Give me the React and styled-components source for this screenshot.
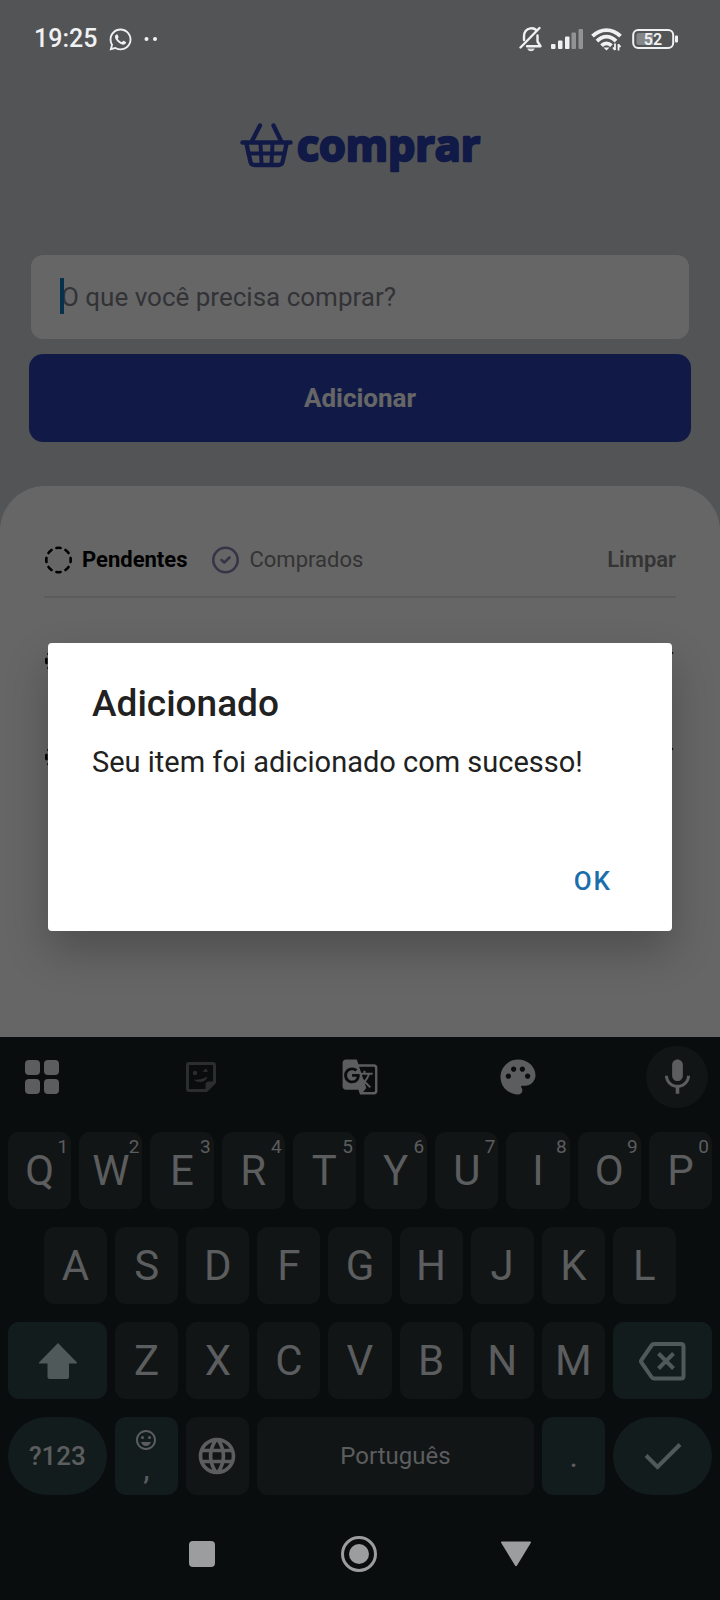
import React from "react";
import styled, { createGlobalStyle } from "styled-components";
import { FaWhatsapp } from "react-icons/fa";
import {
  MdGTranslate,
  MdPalette,
  MdMic,
  MdLanguage,
  MdOutlineEmojiEmotions,
} from "react-icons/md";
import { Trash2 } from "lucide-react";

const GlobalStyle = createGlobalStyle`
  *, *::before, *::after { box-sizing: border-box; }
  body { margin: 0; background: #0a0d0e; }
  body, button, input { font-family: Roboto, "Liberation Sans", sans-serif; }
  button { border: 0; padding: 0; margin: 0; background: none; color: inherit; cursor: pointer; }
  svg { display: block; flex: none; }
`;

const Screen = styled.div`
  position: relative;
  display: flex;
  flex-direction: column;
  min-height: 100vh;
`;

const AppArea = styled.div`
  position: relative;
  flex: 1;
  display: flex;
  flex-direction: column;
  background: #d0d2d8;
`;

const Scrim = styled.div`
  position: absolute;
  inset: 0;
  z-index: 1;
  background: rgba(0, 0, 0, 0.6);
`;

/* Status bar */

const StatusBar = styled.header`
  position: relative;
  z-index: 2;
  display: flex;
  justify-content: space-between;
  align-items: center;
  height: 78px;
  padding: 0 42px 0 34px;
  color: #f0f1f2;
`;

const StatusGroup = styled.div`
  display: flex;
  align-items: center;
  gap: ${(p) => p.$gap}px;
`;

const Clock = styled.time`
  font-size: 25px;
  line-height: 32px;
  font-weight: 500;
`;

/* App content */

const LogoBox = styled.div`
  display: flex;
  justify-content: center;
  padding-top: 32px;
`;

const Form = styled.form`
  display: flex;
  flex-direction: column;
  gap: 13px;
  padding: 73px 29px 44px;
`;

const Field = styled.div`
  position: relative;
  height: 88px;
`;

const TextInput = styled.input`
  width: 100%;
  height: 100%;
  padding: 0 30px;
  border: 2px solid #cfd1d6;
  border-radius: 14px;
  background: #fff;
  font-size: 26px;
  outline: none;
  &::placeholder { color: #7d808b; opacity: 1; }
`;

const Caret = styled.span`
  position: absolute;
  left: 31px;
  top: 25px;
  width: 4px;
  height: 36px;
  background: #0f78c0;
`;

const AddButton = styled.button`
  height: 88px;
  border-radius: 14px;
  background: #2c43b1;
  color: #fff;
  font-size: 26px;
  font-weight: 700;
`;

const Panel = styled.main`
  flex: 1;
  padding: 56px 44px 0;
  border-radius: 45px 45px 0 0;
  background: #fff;
`;

const Filters = styled.div`
  display: flex;
  align-items: center;
  gap: 24px;
  padding-bottom: 18px;
  border-bottom: 2px solid #e4e6ec;
`;

const FilterButton = styled.button`
  display: flex;
  align-items: center;
  gap: 9px;
  font-size: 22px;
  line-height: 36px;
  font-weight: ${(p) => (p.$active ? 700 : 400)};
  color: ${(p) => (p.$active ? "#000" : "#7f7f7f")};
`;

const ClearButton = styled.button`
  margin-left: auto;
  font-size: 22px;
  line-height: 36px;
  font-weight: 600;
  color: #828282;
`;

const Items = styled.ul`
  list-style: none;
  margin: 0;
  padding: 36px 0 0;
`;

const Item = styled.li`
  display: flex;
  align-items: center;
  justify-content: space-between;
  height: 54px;
  margin-bottom: 42px;
`;

/* Dialog */

const DialogLayer = styled.div`
  position: absolute;
  inset: 0;
  z-index: 3;
  display: flex;
  align-items: center;
  justify-content: center;
  padding: 0 48px 26px;
`;

const Dialog = styled.section`
  flex: 1;
  max-width: 624px;
  padding: 38px 44px 16px;
  border-radius: 4px;
  background: #fff;
  color: #212121;
  box-shadow: 0 20px 44px rgba(0, 0, 0, 0.24);
`;

const DialogTitle = styled.h2`
  margin: 0;
  font-size: 37px;
  line-height: 46px;
  font-weight: 500;
`;

const DialogText = styled.p`
  margin: 17px 0 66px;
  font-size: 29px;
  line-height: 36px;
`;

const DialogActions = styled.div`
  display: flex;
  justify-content: flex-end;
`;

const DialogButton = styled.button`
  padding: 0 16px;
  height: 69px;
  color: #1b6eab;
  font-size: 26px;
  font-weight: 500;
  letter-spacing: 2px;
`;

/* Keyboard */

const Keyboard = styled.section`
  display: flex;
  flex-direction: column;
  background: #0a0d0e;
  color: #5b5d5e;
`;

const Toolbar = styled.div`
  display: flex;
  justify-content: space-between;
  padding: 9px 12px 24px 11px;
`;

const ToolButton = styled.button`
  display: grid;
  place-items: center;
  width: 62px;
  height: 62px;
  border-radius: 50%;
  background: ${(p) => (p.$filled ? "#121516" : "none")};
`;

const Rows = styled.div`
  display: flex;
  flex-direction: column;
  gap: 18px;
`;

const KeyRow = styled.div`
  display: grid;
  grid-template-columns: ${(p) => p.$columns};
  gap: 8px;
  padding: 0 ${(p) => p.$inset}px;
`;

const Key = styled.button`
  position: relative;
  display: flex;
  flex-direction: column;
  align-items: center;
  justify-content: center;
  min-width: 0;
  height: ${(p) => (p.$tall ? 78 : 77)}px;
  border-radius: ${(p) => (p.$round ? 39 : 11)}px;
  background: ${(p) => (p.$accent ? "#131c1d" : "#121516")};
  font-size: ${(p) => p.$size || 42}px;
  font-weight: ${(p) => p.$weight || 400};
  line-height: 1;
`;

const Hint = styled.span`
  position: absolute;
  top: 5px;
  right: 3px;
  font-size: 19px;
  font-weight: 400;
`;

const NavBar = styled.nav`
  display: flex;
  align-items: center;
  justify-content: center;
  gap: 117px;
  height: 105px;
  padding: 13px 2px 0 0;
  color: #9c9d9e;
`;

const NavButton = styled.button`
  display: grid;
  place-items: center;
  width: 40px;
  height: 40px;
`;

/* Icons */

const Dots = () => (
  <svg width="14" height="6" viewBox="0 0 14 6" fill="currentColor">
    <circle cx="2.5" cy="3" r="2" />
    <circle cx="11" cy="3" r="2" />
  </svg>
);

const MutedBell = () => (
  <svg width="24" height="26" viewBox="0 0 24 26" fill="none" stroke="currentColor" strokeWidth="2.4" strokeLinecap="round" strokeLinejoin="round">
    <path d="M5 14V10.5C5 6.500 7 3.200 11.500 2.400C14 2 16 2.800 17.400 4.200" />
    <path d="M18.500 9.500V15.500L21.500 20.200H8" />
    <path d="M20.500 2L1.500 21.500" />
    <path d="M9 23.400C10.500 25.200 13.500 25.200 15 23.400Z" fill="currentColor" strokeWidth="1" />
  </svg>
);

const Signal = () => (
  <svg width="32" height="22" viewBox="0 0 32 22" fill="currentColor">
    <rect x="0" y="16" width="4.5" height="5" rx="1" />
    <rect x="7" y="12.5" width="4.5" height="8.5" rx="1" />
    <rect x="14" y="8.5" width="4.5" height="12.5" rx="1" />
    <g opacity="0.4">
      <rect x="20.5" y="4.5" width="4.5" height="16.5" rx="1" />
      <rect x="27.5" y="1" width="4.5" height="20" rx="1" />
    </g>
  </svg>
);

const Wifi = () => (
  <svg width="32" height="24" viewBox="0 0 32 24" fill="none" stroke="currentColor" strokeWidth="3.8">
    <path d="M1.5 9.2C9.500 1 21.500 1 29.500 9.200" />
    <path d="M6 14.200C12 8.200 19 8.200 25 14.200" />
    <path d="M10.500 18.600C13.500 15.600 17.500 15.600 20.500 18.600" />
    <path d="M12.500 20.600L15.500 23.600L18.500 20.600Z" fill="currentColor" stroke="none" />
    <path d="M24 16.500V23M22 20.500L24 23M27.500 23.500V17M27.500 17.500L29.500 20" strokeWidth="1.800" />
  </svg>
);

const Battery = () => (
  <svg width="47" height="22" viewBox="0 0 47 22">
    <rect x="2.200" y="2" width="40" height="18" rx="5" fill="none" stroke="currentColor" strokeWidth="2" />
    <path d="M8 5H22V17H8Q5.500 17 5.500 14.500V7.500Q5.500 5 8 5Z" fill="#858687" />
    <rect x="44" y="7.500" width="3" height="7" rx="1" fill="currentColor" />
    <text x="22" y="17" textAnchor="middle" fontSize="16" fontWeight="600" fill="currentColor">52</text>
  </svg>
);

const Logo = () => (
  <svg width="248" height="70" viewBox="-2 -10 248 70" role="img" aria-label="comprar">
    <g fill="none" stroke="#2c43b1" strokeWidth="4.400" strokeLinecap="round" strokeLinejoin="round">
      <path d="M4.500 22.500H52.500" />
      <path d="M14 21L22 5.500M43 21L35.500 5.500" />
      <path d="M8.500 24L12.500 42Q13.300 45 16.500 45H40.500Q43.700 45 44.500 42L48.500 24" />
      <path d="M10.500 33.500H46.500M22.500 24L23.500 43M34.500 24L33.500 43" strokeWidth="4" />
    </g>
    <text
      x="59"
      y="41"
      fontFamily="'Open Sans', sans-serif"
      fontSize="43"
      fontWeight="700"
      fill="#2c43b1"
      stroke="#2c43b1"
      strokeWidth="2.500"
      strokeLinejoin="round"
    >
      comprar
    </text>
  </svg>
);

const DashedCircle = () => (
  <svg width="29" height="29" viewBox="0 0 29 29" fill="none" stroke="#000" strokeWidth="2.600" strokeLinecap="round">
    <circle cx="14.500" cy="14" r="12.200" pathLength="80" strokeDasharray="4.500 5.500" strokeDashoffset="2.250" />
  </svg>
);

const CheckCircle = () => (
  <svg width="29" height="29" viewBox="0 0 29 29" fill="none" stroke="#8884b4" strokeWidth="2.600" strokeLinecap="round" strokeLinejoin="round">
    <circle cx="14.500" cy="14" r="12.200" />
    <path d="M10.500 14L13.300 16.500L18.500 11.500" />
  </svg>
);

const AppsIcon = () => (
  <svg width="36" height="36" viewBox="0 0 36 36" fill="currentColor">
    <rect x="1" y="1" width="15" height="15" rx="4" />
    <rect x="20" y="1" width="15" height="15" rx="4" />
    <rect x="1" y="20" width="15" height="15" rx="4" />
    <rect x="20" y="20" width="15" height="15" rx="4" />
  </svg>
);

const StickerIcon = () => (
  <svg width="32" height="32" viewBox="0 0 32 32" fill="#2b2d2e">
    <path d="M4 1H28Q31 1 31 4V22L22 31H4Q1 31 1 28V4Q1 1 4 1ZM4 4V28H20.500V24Q20.500 20.500 24 20.500H28V4Z" fillRule="evenodd" />
    <circle cx="10" cy="12" r="2.200" />
    <path d="M17.500 10.500L21 7.500L23 10.500L20 11Z" />
    <path d="M8.500 18.500Q16 19.500 22.500 15.500Q21 20.500 15.500 21Q11 21 8.500 18.500Z" />
  </svg>
);

const ShiftIcon = () => (
  <svg width="40" height="38" viewBox="0 0 40 38" fill="#4f595a">
    <path d="M20 1L39 20.500Q39.500 21.500 38.500 21.500H31V35Q31 37 29 37H11.500Q9.500 37 9.500 35V21.500H1.500Q0.500 21.500 1 20.500Z" />
  </svg>
);

const BackspaceIcon = () => (
  <svg width="48" height="40" viewBox="0 0 48 40" fill="none" stroke="#4f595a" strokeWidth="4">
    <path d="M16 3H43Q45.500 3 45.500 5.500V35Q45.500 37.500 43 37.500H16Q14.500 37.500 13.500 36L3.500 21.500Q2.500 20.200 3.500 19L13.500 4.500Q14.500 3 16 3Z" />
    <path d="M20.500 12.500L35.500 27.500M35.500 12.500L20.500 27.500" />
  </svg>
);

const EnterCheckIcon = () => (
  <svg width="38" height="28" viewBox="0 0 38 28" fill="none" stroke="#4f595a" strokeWidth="4">
    <path d="M2 13.500L13.500 25L36 2.500" />
  </svg>
);

const letters = (text) => text.split("");

export default function App() {
  return (
    <Screen>
      <GlobalStyle />
      <AppArea>
        <StatusBar>
          <StatusGroup $gap={11}>
            <Clock>19:25</Clock>
            <FaWhatsapp size={25} />
            <Dots />
          </StatusGroup>
          <StatusGroup $gap={8}>
            <MutedBell />
            <Signal />
            <Wifi />
            <Battery />
          </StatusGroup>
        </StatusBar>
        <LogoBox>
          <Logo />
        </LogoBox>
        <Form onSubmit={(e) => e.preventDefault()}>
          <Field>
            <TextInput aria-label="O que você precisa comprar?" placeholder="O que você precisa comprar?" />
            <Caret />
          </Field>
          <AddButton type="submit">Adicionar</AddButton>
        </Form>
        <Panel>
          <Filters>
            <FilterButton type="button" $active>
              <DashedCircle />
              Pendentes
            </FilterButton>
            <FilterButton type="button">
              <CheckCircle />
              Comprados
            </FilterButton>
            <ClearButton type="button">Limpar</ClearButton>
          </Filters>
          <Items>
            {[1, 2].map((id) => (
              <Item key={id}>
                <DashedCircle />
                <button type="button" aria-label="Remover">
                  <Trash2 size={32} color="#333" />
                </button>
              </Item>
            ))}
          </Items>
        </Panel>
        <Scrim />
      </AppArea>

      <Keyboard>
        <Toolbar>
          <ToolButton aria-label="Menu"><AppsIcon /></ToolButton>
          <ToolButton aria-label="Figurinhas"><StickerIcon /></ToolButton>
          <ToolButton aria-label="Traduzir"><MdGTranslate size={38} /></ToolButton>
          <ToolButton aria-label="Tema"><MdPalette size={42} /></ToolButton>
          <ToolButton aria-label="Voz" $filled><MdMic size={43} /></ToolButton>
        </Toolbar>
        <Rows>
          <KeyRow $inset={8} $columns="repeat(10, minmax(0, 1fr))">
            {letters("QWERTYUIOP").map((c, i) => (
              <Key key={c}>
                {c}
                <Hint>{(i + 1) % 10}</Hint>
              </Key>
            ))}
          </KeyRow>
          <KeyRow $inset={44} $columns="repeat(9, minmax(0, 1fr))">
            {letters("ASDFGHJKL").map((c) => (
              <Key key={c}>{c}</Key>
            ))}
          </KeyRow>
          <KeyRow $inset={8} $columns="99fr repeat(7, 63fr) 99fr">
            <Key aria-label="Shift" $accent><ShiftIcon /></Key>
            {letters("ZXCVBNM").map((c) => (
              <Key key={c}>{c}</Key>
            ))}
            <Key aria-label="Apagar" $accent><BackspaceIcon /></Key>
          </KeyRow>
          <KeyRow $inset={8} $columns="99fr 63fr 63fr 278fr 63fr 99fr">
            <Key $tall $round $accent $size={26} $weight={500}>?123</Key>
            <Key $tall $accent $size={32}>
              <MdOutlineEmojiEmotions size={24} />
              ,
            </Key>
            <Key $tall aria-label="Idioma"><MdLanguage size={44} /></Key>
            <Key $tall $size={24}>Português</Key>
            <Key $tall $accent $size={32}>.</Key>
            <Key $tall $round $accent aria-label="Concluir"><EnterCheckIcon /></Key>
          </KeyRow>
        </Rows>
        <NavBar>
          <NavButton aria-label="Recentes">
            <svg width="26" height="26" viewBox="0 0 26 26" fill="currentColor">
              <rect width="26" height="26" rx="4" />
            </svg>
          </NavButton>
          <NavButton aria-label="Início">
            <svg width="38" height="38" viewBox="0 0 38 38" fill="none" stroke="currentColor" strokeWidth="3">
              <circle cx="19" cy="19" r="16.500" />
              <circle cx="19" cy="19" r="10" fill="currentColor" stroke="none" />
            </svg>
          </NavButton>
          <NavButton aria-label="Voltar">
            <svg width="32" height="26" viewBox="0 0 32 26" fill="currentColor">
              <path d="M2 0.500H30Q31.500 0.500 30.700 2L17 24.500Q16 26 15 24.500L1.300 2Q0.500 0.500 2 0.500Z" />
            </svg>
          </NavButton>
        </NavBar>
      </Keyboard>

      <DialogLayer>
        <Dialog role="alertdialog" aria-labelledby="dialog-title" aria-describedby="dialog-text">
          <DialogTitle id="dialog-title">Adicionado</DialogTitle>
          <DialogText id="dialog-text">Seu item foi adicionado com sucesso!</DialogText>
          <DialogActions>
            <DialogButton type="button">OK</DialogButton>
          </DialogActions>
        </Dialog>
      </DialogLayer>
    </Screen>
  );
}
